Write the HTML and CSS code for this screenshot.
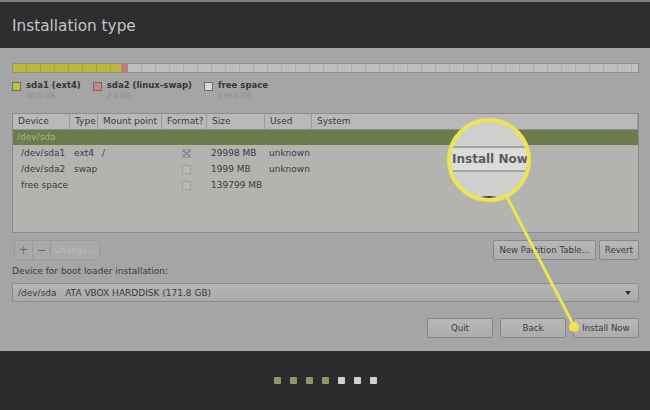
FILE: index.html
```html
<!DOCTYPE html>
<html lang="en">

<head>
    <meta charset="UTF-8">
    <title>Installation type</title>
    <link rel="stylesheet" href="styles.css">
</head>

<body>
    <div class="header">
        <h1>Installation type</h1>
    </div>
    <div class="main">
        <div class="pbar">
            <span class="seg sda1"></span>
            <span class="seg sda2"></span>
            <span class="seg free"></span>
        </div>
        <div class="legend">
            <div class="item">
                <span class="swatch yellow"></span>
                <div>
                    <div class="name">sda1 (ext4)</div>
                    <div class="size">30.0 GB</div>
                </div>
            </div>
            <div class="item">
                <span class="swatch red"></span>
                <div>
                    <div class="name">sda2 (linux-swap)</div>
                    <div class="size">2.0 GB</div>
                </div>
            </div>
            <div class="item">
                <span class="swatch white"></span>
                <div>
                    <div class="name">free space</div>
                    <div class="size">139.8 GB</div>
                </div>
            </div>
        </div>
        <div class="table">
            <div class="row thead">
                <div>Device</div>
                <div>Type</div>
                <div>Mount point</div>
                <div>Format?</div>
                <div>Size</div>
                <div>Used</div>
                <div>System</div>
            </div>
            <div class="disk">/dev/sda</div>
            <div class="row part">
                <div class="dev">/dev/sda1</div>
                <div>ext4</div>
                <div>/</div>
                <div class="fmt"><span class="check on"></span></div>
                <div>29998 MB</div>
                <div>unknown</div>
                <div></div>
            </div>
            <div class="row part">
                <div class="dev">/dev/sda2</div>
                <div>swap</div>
                <div></div>
                <div class="fmt"><span class="check"></span></div>
                <div>1999 MB</div>
                <div>unknown</div>
                <div></div>
            </div>
            <div class="row part">
                <div class="dev">free space</div>
                <div></div>
                <div></div>
                <div class="fmt"><span class="check"></span></div>
                <div>139799 MB</div>
                <div></div>
                <div></div>
            </div>
        </div>
        <div class="tools">
            <div class="btn-group">
                <button class="sym">+</button>
                <button class="sym">&minus;</button>
                <button class="off">Change...</button>
            </div>
            <div class="spacer"></div>
            <button class="btn">New Partition Table...</button>
            <button class="btn">Revert</button>
        </div>
        <div class="boot-label">Device for boot loader installation:</div>
        <div class="combo">
            <span>/dev/sda&nbsp;&nbsp;&nbsp;ATA VBOX HARDDISK (171.8 GB)</span>
            <span class="arrow"></span>
        </div>
        <div class="actions">
            <button class="btn wide">Quit</button>
            <button class="btn wide">Back</button>
            <button class="btn wide">Install Now</button>
        </div>
    </div>
    <div class="footer">
        <div class="dots">
            <span class="dot done"></span>
            <span class="dot done"></span>
            <span class="dot done"></span>
            <span class="dot done"></span>
            <span class="dot"></span>
            <span class="dot"></span>
            <span class="dot"></span>
        </div>
    </div>

    <!-- callout: zoomed view of the Install Now button -->
    <div class="magnifier">
        <div class="mag-line"></div>
        <div class="mag-label">Install Now</div>
        <div class="mag-line"></div>
        <div class="mag-shadow"></div>
    </div>
    <svg class="pointer" width="650" height="410" viewBox="0 0 650 410">
        <line x1="508" y1="199" x2="574" y2="326" stroke="#ece451" stroke-width="3" stroke-linecap="round" />
        <circle cx="574" cy="327" r="5" fill="#ece451" />
    </svg>
</body>

</html>
```

FILE: styles.css
```css
html,
body {
    margin: 0;
    width: 650px;
    height: 410px;
    overflow: hidden;
}

body {
    position: relative;
    font-family: "DejaVu Sans", sans-serif;
    font-size: 9px;
    color: #3b3b3b;
    background-color: #a5a5a5;
}

.header {
    height: 46px;
    border-top: 2px solid #7d7d7d;
    background-color: #2e2d30;
}

.header h1 {
    margin: 0;
    padding: 14px 0 0 12px;
    font-size: 15.3px;
    font-weight: normal;
    line-height: 20px;
    color: #c4c4c4;
}

.main {
    height: 288px;
    padding: 15px 11px 0 12px;
    background-color: #a5a5a5;
}

/* partition bar */

.pbar {
    display: flex;
    height: 8px;
    border: 1px solid #8f8f8f;
    background-color: #bdbdbd;
}

.seg {
    display: block;
    height: 100%;
}

.sda1 {
    width: 108px;
    background: repeating-linear-gradient(90deg, #bcb83c 0 13px, #aaa637 13px 14px);
}

.sda2 {
    width: 7px;
    background-color: #c27b78;
}

.free {
    flex: 1;
    background: repeating-linear-gradient(90deg, #bfbfbf 0 13px, #b0b0b0 13px 14px);
}

.legend {
    display: flex;
    gap: 12px;
    margin-top: 7px;
    height: 21px;
}

.item {
    display: flex;
    gap: 5px;
}

.swatch {
    width: 7px;
    height: 7px;
    margin-top: 2px;
    border: 1px solid #6e6e6e;
}

.yellow {
    background-color: #c6c33a;
}

.red {
    background-color: #cc8684;
}

.white {
    background-color: #d6d6d6;
}

.name {
    font-weight: bold;
    font-size: 8.5px;
    line-height: 11px;
    color: #353535;
}

.size {
    font-size: 7.3px;
    line-height: 9px;
    color: #8c8c8c;
}

/* partitions table */

.table {
    height: 118px;
    margin-top: 12px;
    border: 1px solid #8c8c8c;
    background-color: #b3b3b0;
}

.row {
    display: grid;
    grid-template-columns: 57px 28px 64px 45px 58px 47px 1fr;
    align-items: center;
}

.thead {
    height: 15px;
    background-color: #b9b9b9;
    border-bottom: 1px solid #8e8e8e;
}

.thead > div {
    height: 15px;
    line-height: 15px;
    padding-left: 5px;
    border-right: 1px solid #9a9a9a;
}

.disk {
    height: 15px;
    line-height: 15px;
    padding-left: 4px;
    color: #a6b889;
    background-color: #6a7d4b;
}

.part {
    height: 16px;
}

.part > div {
    padding-left: 4px;
}

.part > .dev {
    padding-left: 8px;
}

.fmt {
    display: flex;
    justify-content: center;
}

.check {
    width: 7px;
    height: 7px;
    border: 1px solid #9c9c9c;
    background-color: #b9b9b9;
}

.check.on {
    background: linear-gradient(45deg, #b9b9b9 40%, #8e8e8e 40% 60%, #b9b9b9 60%),
        linear-gradient(-45deg, #b9b9b9 40%, #8e8e8e 40% 60%, #b9b9b9 60%);
    background-blend-mode: darken;
}

/* buttons */

button {
    font-family: inherit;
    font-size: 8.6px;
    color: #3b3b3b;
    padding: 0;
}

.tools {
    display: flex;
    gap: 3px;
    margin-top: 7px;
    height: 20px;
}

.spacer {
    flex: 1;
}

.btn-group {
    display: flex;
    margin-left: 2px;
    height: 18px;
    border: 1px solid #9a9a9a;
    border-radius: 2px;
}

.btn-group button {
    height: 18px;
    border: none;
    border-right: 1px solid #9a9a9a;
    background-color: #a9a9a9;
}

.btn-group button:last-child {
    border-right: none;
}

.sym {
    width: 18px;
    font-size: 12px;
    color: #6b6b6b;
}

.off {
    width: 48px;
    color: #bdbdbd;
}

.btn {
    height: 20px;
    padding: 0 6px;
    border: 1px solid #878787;
    border-radius: 2px;
    background: linear-gradient(#b8b8b8, #acacac);
}

.tools .btn {
    padding: 0 5px;
}

.boot-label {
    margin-top: 5px;
    line-height: 12px;
}

.combo {
    display: flex;
    justify-content: space-between;
    align-items: center;
    height: 17px;
    margin-top: 6px;
    padding: 0 7px 0 5px;
    border: 1px solid #8c8c8c;
    border-radius: 2px;
    background: linear-gradient(#b6b6b6, #aaaaaa);
}

.arrow {
    width: 0;
    height: 0;
    border-left: 3px solid transparent;
    border-right: 3px solid transparent;
    border-top: 4px solid #2e2e2e;
}

.actions {
    display: flex;
    justify-content: flex-end;
    gap: 7px;
    margin-top: 16px;
}

.wide {
    width: 66px;
}

/* footer with progress dots */

.footer {
    height: 59px;
    display: flex;
    justify-content: center;
    align-items: center;
    background-color: #2c2b2e;
}

.dots {
    display: flex;
    gap: 9px;
}

.dot {
    width: 7px;
    height: 7px;
    border-radius: 1px;
    background-color: #cfcfcf;
}

.dot.done {
    background-color: #8b9a68;
}

/* magnifier callout */

.magnifier {
    position: absolute;
    left: 447px;
    top: 118px;
    width: 76px;
    height: 76px;
    border: 4px solid #ece451;
    border-radius: 50%;
    overflow: hidden;
    background-color: #cfcfcd;
}

.mag-line {
    height: 2px;
    margin-top: 24px;
    background-color: #a3a3a1;
}

.mag-label + .mag-line {
    margin-top: 0;
}

.mag-label {
    height: 22px;
    line-height: 22px;
    padding-left: 1px;
    font-size: 12px;
    font-weight: bold;
    white-space: nowrap;
    color: #5b5b5d;
    background-color: #dcdcda;
}

.mag-shadow {
    width: 36px;
    height: 16px;
    margin: 24px auto 0;
    border-radius: 50%;
    border-top: 3px solid #3c3c3c;
}

.pointer {
    position: absolute;
    left: 0;
    top: 0;
}
```
